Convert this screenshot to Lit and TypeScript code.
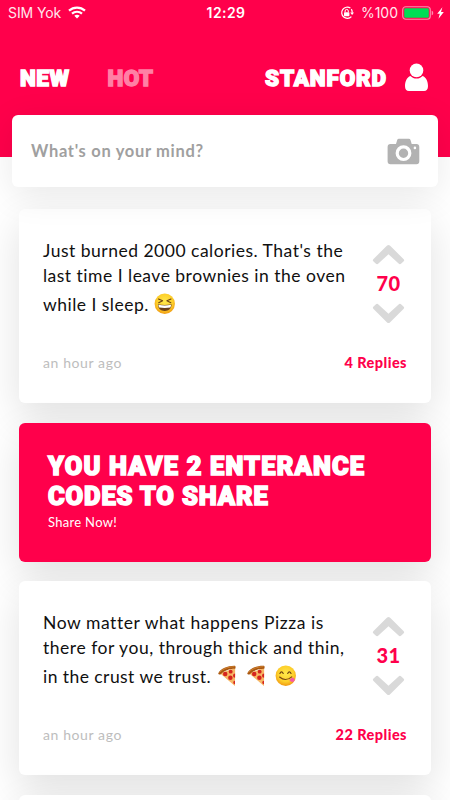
import { LitElement, html, css, svg } from "lit";
import { customElement, property } from "lit/decorators.js";

interface Line {
  text: string;
  tracking: number;
  emoji?: string[];
}

interface Post {
  lines: Line[];
  score: number;
  replies: string;
}

const posts: Post[] = [
  {
    lines: [
      { text: "Just burned 2000 calories. That's the", tracking: 0.5 },
      { text: "last time I leave brownies in the oven", tracking: 0.49 },
      { text: "while I sleep.", tracking: 0.48, emoji: ["laugh"] },
    ],
    score: 70,
    replies: "4 Replies",
  },
  {
    lines: [
      { text: "Now matter what happens Pizza is", tracking: 0.56 },
      { text: "there for you, through thick and thin,", tracking: 0.53 },
      { text: "in the crust we trust.", tracking: 0.44, emoji: ["pizza", "pizza", "yum"] },
    ],
    score: 31,
    replies: "22 Replies",
  },
];

const face = svg`
  <defs>
    <radialGradient id="g" cx="50%" cy="40%" r="60%">
      <stop offset="0" stop-color="#ffe84a" />
      <stop offset=".65" stop-color="#fdcf2b" />
      <stop offset="1" stop-color="#f09a12" />
    </radialGradient>
  </defs>
  <circle cx="11" cy="11" r="10.4" fill="url(#g)" />`;

const drawings: Record<string, unknown> = {
  laugh: svg`${face}
    <path d="M4.6 6.2 8.8 8 4.8 9.9M17.4 6.2 13.2 8l4 1.9" fill="none" stroke="#6b4212" stroke-width="1.1" stroke-linecap="round" stroke-linejoin="round" />
    <path d="M4 11.6q7 1.5 14 0c0 4.2-3 6.9-7 6.9s-7-2.7-7-6.9z" fill="#6b3f18" />
    <path d="M4.5 12q6.500 1.400 13 0-.1 1.700-.8 2.800-5.700 1-11.400 0-.7-1.200-.8-2.800z" fill="#fff" />`,
  yum: svg`${face}
    <path d="M5 8.700q1.700-3.200 3.400 0M13 8.700q1.700-3.200 3.400 0" fill="none" stroke="#6b4212" stroke-width="1.200" stroke-linecap="round" />
    <path d="M4.700 12.300q6 5.200 12.400-.2" fill="none" stroke="#7a4612" stroke-width="1.200" stroke-linecap="round" />
    <path d="M14.600 15.200l3.200-2.400c1.800.2 2.900 1.900 2 3.400-1.300 1.900-3.900 1.500-5.200-1z" fill="#f758a5" />`,
  pizza: svg`
    <path d="M3 8.400 18.600 3 18.400 21.600z" fill="#f7b765" />
    <path d="M1.300 8.400C4 3.500 11 .6 18.300.8c.9.100 1 2.600.2 3C12.700 3.800 7 6 3.600 9.600c-.8.700-2.500-.2-2.300-1.200z" fill="#a9560f" />
    <path d="M2.500 7.500C6 3.800 11.500 1.800 18 1.700" fill="none" stroke="#d48734" stroke-width=".9" />
    <g fill="#d5241f">
      <circle cx="8.400" cy="9.300" r="2.300" /><circle cx="14" cy="6.800" r="2" />
      <circle cx="13.700" cy="13" r="2.300" /><path d="M18.500 8.800a2.100 2.100 0 0 0 0 4.200zM18.400 16a1.800 1.800 0 0 0 0 3.600z" />
    </g>`,
};

@customElement("post-card")
class PostCard extends LitElement {
  @property({ attribute: false }) post?: Post;

  static styles = css`
    :host {
      display: block;
      box-sizing: border-box;
      height: 194px;
      border-radius: 6px;
      background: #fff;
      box-shadow: 0 14px 40px rgba(0, 0, 0, 0.12);
      padding: 29px 24px 0;
    }
    .top {
      display: flex;
      justify-content: space-between;
      height: 109px;
    }
    .line {
      display: flex;
      align-items: center;
      height: 25px;
      font-size: 17.5px;
      color: #101010;
      white-space: pre;
    }
    .line.tall {
      height: 32px;
    }
    .emoji {
      width: 21.5px;
      height: 21.5px;
      margin-right: 7.5px;
    }
    .emoji.first {
      margin-left: 5.5px;
    }
    .votes {
      display: flex;
      flex-direction: column;
      align-items: center;
      width: 33px;
      margin: 6px 2px 0 0;
    }
    .arrow {
      display: block;
      width: 33px;
      height: 21px;
      flex: none;
    }
    .score {
      height: 38px;
      font: 900 20px/36px Lato, sans-serif;
      letter-spacing: 0.4px;
      color: #ff004b;
    }
    .foot {
      display: flex;
      justify-content: space-between;
      margin-top: 5px;
      font-size: 14px;
      line-height: 22px;
    }
    .time {
      color: #bdbdbd;
      letter-spacing: 0.6px;
    }
    .replies {
      color: #ff004b;
      font-size: 14.5px;
      font-weight: 900;
      letter-spacing: 0.45px;
    }
  `;

  render() {
    const p = this.post;
    if (!p) return html``;
    return html`
      <div class="top">
        <div>
          ${p.lines.map(
            (l) => html`<div class="line ${l.emoji ? "tall" : ""}"><span style="letter-spacing:${l.tracking}px">${l.text}</span>${(l.emoji ?? []).map(
              (e, i) => html`<svg class="emoji ${i ? "" : "first"}" viewBox="0 0 22 22">${drawings[e]}</svg>`
            )}</div>`
          )}
        </div>
        <div class="votes">
          <svg class="arrow" viewBox="0 0 33 21"><path d="M1.300 15.200 15.100 1.600q1.400-1.400 2.800 0L31.700 15.200q1 1 0 2l-2.400 2.400q-1.400 1.100-2.700 0L16.500 10.200 6.400 19.600q-1.300 1.100-2.700 0L1.300 17.200q-1-1 0-2z" fill="#d9d9d9" /></svg>
          <div class="score">${p.score}</div>
          <svg class="arrow" viewBox="0 0 33 21"><path d="M1.300 5.800 15.100 19.400q1.400 1.400 2.800 0L31.700 5.800q1-1 0-2L29.300 1.400q-1.400-1.100-2.700 0L16.500 10.800 6.400 1.400q-1.300-1.100-2.700 0L1.300 3.800q-1 1 0 2z" fill="#d9d9d9" /></svg>
        </div>
      </div>
      <div class="foot"><span class="time">an hour ago</span><span class="replies">${p.replies}</span></div>
    `;
  }
}

@customElement("app-root")
class AppRoot extends LitElement {
  static styles = css`
    :host {
      display: block;
      height: 800px;
      overflow: hidden;
      background: #fff;
      font-family: Lato, sans-serif;
    }
    .header {
      box-sizing: border-box;
      height: 157px;
      background: #ff004b;
      color: #fff;
    }
    .status {
      display: grid;
      grid-template-columns: 1fr auto 1fr;
      align-items: center;
      height: 25px;
      padding: 0 6px 0 8px;
      font: 14px/25px Inter, sans-serif;
    }
    .status > div {
      display: flex;
      align-items: center;
    }
    .carrier {
      gap: 7px;
      letter-spacing: -0.1px;
    }
    .label {
      opacity: 0.9;
    }
    .clock {
      font-weight: 600;
      letter-spacing: 0.4px;
    }
    .power {
      justify-content: flex-end;
    }
    svg {
      display: block;
      flex: none;
    }
    .lock {
      margin-right: 7px;
    }
    .battery {
      margin: 0 3px 0 4px;
    }
    .nav {
      display: flex;
      align-items: center;
      height: 54px;
      margin-top: 25px;
      padding: 0 21px 0 20px;
      font: 900 22.5px/54px Roboto, sans-serif;
      letter-spacing: 0.5px;
      -webkit-text-stroke: 1.4px currentColor;
    }
    .nav span {
      padding-top: 1px;
    }
    .hot {
      margin-left: 38px;
      color: #ff80a5;
    }
    .place {
      margin-left: auto;
      margin-right: 17px;
      letter-spacing: 0.85px;
    }
    .composer {
      position: relative;
      display: flex;
      align-items: center;
      justify-content: space-between;
      box-sizing: border-box;
      height: 72px;
      margin: -42px 12px 0;
      padding: 0 18px 0 19px;
      border-radius: 6px;
      background: #fff;
      box-shadow: 0 8px 36px rgba(0, 0, 0, 0.09);
      color: #a0a0a0;
      font-size: 16.5px;
      font-weight: 700;
      letter-spacing: 0.68px;
    }
    .prompt {
      padding-bottom: 1px;
    }
    .feed {
      display: flex;
      flex-direction: column;
      gap: 19.5px;
      padding: 22px 19px 0;
    }
    .banner {
      box-sizing: border-box;
      height: 139px;
      padding: 28px 29px 0;
      border-radius: 6px;
      background: #ff004b;
      box-shadow: 0 14px 40px rgba(0, 0, 0, 0.12);
      color: #fff;
    }
    .title {
      font: 900 25.5px/30px Roboto, sans-serif;
      white-space: nowrap;
      -webkit-text-stroke: 1.5px currentColor;
    }
    .wide {
      letter-spacing: 1.12px;
    }
    .narrow {
      letter-spacing: 0.85px;
    }
    .share {
      font-size: 13px;
      line-height: 22px;
      letter-spacing: 0.3px;
    }
  `;

  render() {
    return html`
      <div class="header">
        <div class="status">
          <div class="carrier">
            <span class="label">SIM Yok</span>
            <svg width="18" height="13" viewBox="0 0 18 13"><g fill="none" stroke="#fff" stroke-width="2.200"><path d="M1 4.600C5.500.500 12.500.500 17 4.600" /><path d="M4 7.600c2.800-2.500 7.200-2.500 10 0" /></g><path d="M6.300 9.800c1.500-1.400 3.900-1.400 5.400 0L9 12.600z" fill="#fff" /></svg>
          </div>
          <div class="clock">12:29</div>
          <div class="power">
            <svg class="lock" width="14" height="14" viewBox="0 0 14 14"><path d="M10.400 2.100A5.600 5.600 0 1 0 11.400 10.600M11.300 3.200a5.600 5.600 0 0 1 .9 3.500" fill="none" stroke="#fff" stroke-width="1.200" /><path d="M10.200 6.400H14L12.100 9z" fill="#fff" /><rect x="4" y="6.200" width="5.400" height="4" rx=".6" fill="#fff" /><path d="M5.100 6.300V5a1.600 1.600 0 0 1 3.200 0v1.300" fill="none" stroke="#fff" /></svg>
            <span class="label">%100</span>
            <svg class="battery" width="32" height="14" viewBox="0 0 32 14"><rect x=".7" y=".7" width="27.600" height="12.600" rx="3" fill="none" stroke="#fff" stroke-opacity=".55" stroke-width="1.100" /><rect x="2.200" y="2.200" width="24.600" height="9.600" rx="1.300" fill="#00de55" /><path d="M29.700 4.700c2 .5 2 4.100 0 4.600z" fill="#fff" fill-opacity=".55" /></svg>
            <svg width="7" height="12" viewBox="0 0 7 12"><path d="M5.400.200.200 6.700h2.600L1.500 11.800 6.800 5.100H4z" fill="#fff" /></svg>
          </div>
        </div>
        <div class="nav">
          <span>NEW</span><span class="hot">HOT</span><span class="place">STANFORD</span>
          <svg width="25" height="29" viewBox="0 0 25 29"><circle cx="12.500" cy="7.400" r="6.800" fill="#fff" /><path d="M6.400 12.900c3.300 3.400 8.900 3.400 12.200 0 3.500 1.200 5.400 5.600 5.400 10.200 0 3.300-1.400 5-4 5H5c-2.600 0-4-1.700-4-5 0-4.600 1.900-9 5.400-10.200z" fill="#fff" /></svg>
        </div>
      </div>
      <div class="composer">
        <span class="prompt">What's on your mind?</span>
        <svg width="33" height="27" viewBox="0 0 33 27"><path fill="#b2b2b2" d="M3.500 6H9l1.200-4q.4-1.300 1.700-1.300h9.900q1.300 0 1.700 1.300l1.200 4h4.700Q32.300 6 32.300 8.900V23.300q0 2.900-2.900 2.900H3.500Q.6 26.200.6 23.300V8.900Q.6 6 3.500 6z" /><circle cx="16.500" cy="15.200" r="6.300" fill="none" stroke="#fff" stroke-width="3.200" /><circle cx="27.900" cy="9.900" r="1.300" fill="#fff" /></svg>
      </div>
      <div class="feed">
        <post-card .post=${posts[0]}></post-card>
        <div class="banner">
          <div class="title"><span class="wide">YOU HAVE 2 ENTERANCE</span><br /><span class="narrow">CODES TO SHARE</span></div>
          <div class="share">Share Now!</div>
        </div>
        <post-card .post=${posts[1]}></post-card>
        <post-card></post-card>
      </div>
    `;
  }
}
